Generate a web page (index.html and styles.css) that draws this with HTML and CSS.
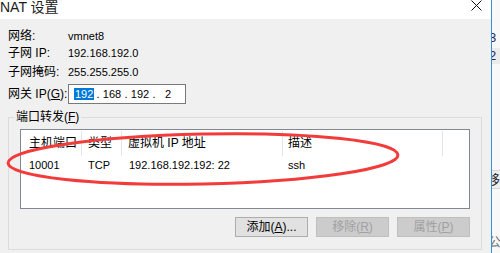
FILE: index.html
```html
<!DOCTYPE html>
<html lang="zh-CN">
<head>
    <meta charset="UTF-8">
    <title>NAT 设置</title>
    <link rel="stylesheet" href="styles.css">
</head>
<body>
    <div class="window">
        <div class="dialog">
            <div class="titlebar">
                <span class="title">NAT 设置</span>
                <svg class="close" width="11" height="11" viewBox="0 0 11 11">
                    <path d="M0.5 0.5 L10.5 10.5 M10.5 0.5 L0.5 10.5" stroke="#111" stroke-width="1" fill="none"/>
                </svg>
            </div>

            <div class="info">
                <span class="label">网络:</span>
                <span class="value">vmnet8</span>
                <span class="label">子网 IP:</span>
                <span class="value">192.168.192.0</span>
                <span class="label">子网掩码:</span>
                <span class="value">255.255.255.0</span>
                <span class="label gw-label">网关 IP(<u>G</u>):</span>
                <div class="ip-box">
                    <span class="ip-field"><span class="selected">192</span></span>
                    <span class="ip-dot">.</span>
                    <span class="ip-field">168</span>
                    <span class="ip-dot">.</span>
                    <span class="ip-field">192</span>
                    <span class="ip-dot">.</span>
                    <span class="ip-field">2</span>
                </div>
            </div>

            <fieldset class="group">
                <legend>端口转发(<u>F</u>)</legend>
                <div class="list">
                    <div class="list-head">
                        <div class="col c1">主机端口</div>
                        <div class="col c2">类型</div>
                        <div class="col c3">虚拟机 IP 地址</div>
                        <div class="col c4">描述</div>
                        <div class="col c5"></div>
                    </div>
                    <div class="list-row">
                        <div class="col c1">10001</div>
                        <div class="col c2">TCP</div>
                        <div class="col c3">192.168.192.192: 22</div>
                        <div class="col c4">ssh</div>
                        <div class="col c5"></div>
                    </div>
                </div>
                <div class="buttons">
                    <button class="btn">添加(<u>A</u>)...</button>
                    <button class="btn" disabled>移除(<u>R</u>)</button>
                    <button class="btn" disabled>属性(<u>P</u>)</button>
                </div>
            </fieldset>
        </div>

        <!-- the window behind the dialog -->
        <div class="behind">
            <div class="behind-3">3</div>
            <div class="behind-2">2</div>
            <div class="behind-btn">移</div>
            <div class="behind-bottom">公</div>
        </div>

        <svg class="mark" width="500" height="253" viewBox="0 0 500 253">
            <ellipse cx="203" cy="159" rx="195" ry="25" transform="rotate(-1.2 203 159)" fill="none" stroke="#f23b3b" stroke-width="3"/>
        </svg>
    </div>
</body>
</html>
```

FILE: styles.css
```css
* {
    margin: 0;
    padding: 0;
    box-sizing: border-box;
}

body {
    font-family: "Liberation Sans", "Noto Sans CJK SC", sans-serif;
    font-size: 12px;
    color: #000;
    background: #f0f0f0;
    width: 500px;
    height: 253px;
    overflow: hidden;
}

.window {
    position: relative;
    display: flex;
    height: 253px;
}

.dialog {
    width: 492px;
    height: 253px;
    background: #f0f0f0;
    border-right: 1px solid #3a8fd0;
}

.titlebar {
    height: 19px;
    background: #fff;
    display: flex;
    justify-content: space-between;
    align-items: flex-start;
}

.title {
    font-size: 14px;
    line-height: 15px;
    color: #1a1a1a;
}

.close {
    margin-top: 0;
    margin-right: 9px;
}

.info {
    display: grid;
    grid-template-columns: 60px auto;
    grid-template-rows: 17px 19px 20px 20px;
    padding: 9px 0 0 8px;
    line-height: 16px;
}

.value {
    font-size: 11px;
}

.gw-label {
    align-self: center;
}

.ip-box {
    width: 118px;
    height: 20px;
    border: 1px solid #7a7a7a;
    background: #fff;
    display: flex;
    align-items: center;
    padding-left: 5px;
    font-size: 11px;
    line-height: 15px;
}

.ip-field {
    width: 20px;
    text-align: center;
}

.ip-dot {
    width: 8px;
    text-align: center;
}

.selected {
    background: #0078d7;
    color: #fff;
    padding: 0 1px;
}

.group {
    margin: 6px 9px 0 8px;
    padding: 5px 11px 12px 11px;
    border: 1px solid #dcdcdc;
}

.group legend {
    margin-left: -6px;
    padding: 0 2px;
    line-height: 14px;
}

.list {
    height: 80px;
    background: #fff;
    border: 1px solid #828790;
}

.list-head,
.list-row {
    display: grid;
    grid-template-columns: 61px 40px 161px 160px 1fr;
}

.list-head {
    height: 27px;
}

.list-head .col {
    margin-top: 1px;
    height: 25px;
    line-height: 25px;
    border-right: 1px solid #e5e5e5;
}

.list-head .c5 {
    border-right: none;
}

.list-row {
    height: 16px;
    line-height: 16px;
    font-size: 11px;
}

.c1 { padding-left: 8px; }
.c2 { padding-left: 6px; }
.c3 { padding-left: 6px; }
.c4 { padding-left: 5px; }

.list-row .c3 { padding-left: 7px; }

.buttons {
    display: flex;
    justify-content: flex-end;
    gap: 8px;
    margin-top: 8px;
}

.btn {
    width: 73px;
    height: 20px;
    font-family: inherit;
    font-size: 12px;
    line-height: 18px;
    color: #000;
    background: #e1e1e1;
    border: 1px solid #adadad;
}

.btn:disabled {
    background: #cccccc;
    border-color: #bfbfbf;
    color: #a0a0a0;
}

.behind {
    width: 8px;
    height: 253px;
    background: #f8f8f8;
    overflow: hidden;
    font-size: 13px;
    line-height: 14px;
    color: #1a2a6a;
}

.behind-3 {
    margin: 31px 0 0 -3px;
}

.behind-2 {
    margin-top: 3px;
    margin-left: -3px;
    padding: 1px 0;
    background: #ebebeb;
}

.behind-btn {
    margin-top: 106px;
    height: 19px;
    border-top: 1px solid #d9d9d9;
    border-bottom: 1px solid #d9d9d9;
    background: #eeeeee;
    color: #222;
    text-indent: -5px;
    line-height: 17px;
}

.behind-bottom {
    margin-top: 46px;
    color: #777;
    text-indent: -4px;
}

.mark {
    position: absolute;
    left: 0;
    top: 0;
    pointer-events: none;
}
```
